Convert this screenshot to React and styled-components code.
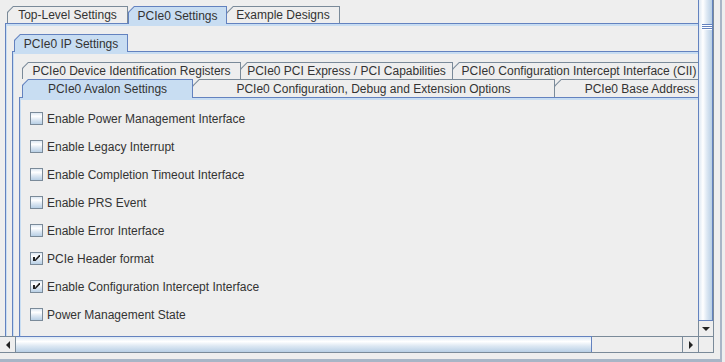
import React from 'react'
import styled, { createGlobalStyle } from 'styled-components'

const GlobalStyle = createGlobalStyle`
  html, body {
    margin: 0;
    padding: 0;
    background: #eeeeee;
  }
  body {
    font-family: "Liberation Sans", Arial, sans-serif;
    font-size: 12px;
    color: #333333;
  }
`

const Frame = styled.div`
  width: 720px;
  height: 359px;
  border-right: 2px solid #a8b5c6;
  border-bottom: 3px solid #a8b5c6;
  background: #eeeeee;
  overflow: hidden;
`

const ScrollPane = styled.div`
  display: grid;
  grid-template-columns: 698px 16px;
  grid-template-rows: 336px 17px;
  width: 714px;
`

const Viewport = styled.div`
  overflow: hidden;
  padding: 6px 0 0 5px;
`

const Pane = styled.div`
  display: flex;
  flex-direction: column;
  width: ${p => (p.$w ? `${p.$w}px` : 'auto')};
`

const TabRun = styled.div`
  display: flex;
  align-items: flex-start;
  height: ${p => p.$h}px;
  padding-left: ${p => p.$inset}px;
  position: relative;
  z-index: 1;
`

const Tab = styled.div`
  flex: none;
  box-sizing: border-box;
  display: flex;
  width: ${p => p.$w}px;
  height: ${p => (p.$sel ? p.$h + 1 : p.$h)}px;
  padding: 1px 1px 0 ${p => (p.$edge ? 1 : 0)}px;
  background: ${p => (p.$sel ? '#6382bf' : '#7a8a99')};
  clip-path: polygon(6px 0, 100% 0, 100% 100%, 0 100%, 0 6px);
`

const TabFace = styled.div`
  flex: 1;
  display: flex;
  align-items: center;
  justify-content: center;
  white-space: nowrap;
  overflow: hidden;
  background: ${p => (p.$sel ? '#c8ddf2' : '#eeeeee')};
  clip-path: ${p =>
    p.$edge
      ? 'polygon(5.4px 0, 100% 0, 100% 100%, 0 100%, 0 5.4px)'
      : 'polygon(6.4px 0, 100% 0, 100% 100%, 0 100%, 0 6.4px)'};
`

const Content = styled.div`
  flex: 1;
  border-top: 1px solid #6382bf;
  border-left: 1px solid #6382bf;
  padding: 2px 0 0 1px;
  background: #c8ddf2;
`

const Body = styled.div`
  background: #eeeeee;
  padding: ${p => p.$pad};
  min-height: 400px;
`

const OptionList = styled.div`
  display: flex;
  flex-direction: column;
  gap: 15px;
`

const Option = styled.label`
  display: flex;
  align-items: center;
  gap: 4px;
  height: 13px;
  white-space: nowrap;
`

const Box = styled.span`
  flex: none;
  box-sizing: border-box;
  width: 13px;
  height: 13px;
  border: 1px solid #7a8a99;
  background: linear-gradient(to bottom, #dde8f3 0%, #ffffff 30%, #dde8f3 60%, #b8cfe5 100%);
  display: flex;

  svg {
    display: block;
  }
`

const VScroll = styled.div`
  display: flex;
  flex-direction: column;
  border-right: 1px solid #7a8a99;
`

const VThumb = styled.div`
  height: 321px;
  box-sizing: border-box;
  border-left: 1px solid #6382bf;
  border-right: 1px solid #6382bf;
  border-bottom: 1px solid #6382bf;
  background: linear-gradient(to right, #dde8f3 0%, #ffffff 30%, #dde8f3 60%, #b8cfe5 100%);
  padding: 24px 0 0 3px;
`

const Grip = styled.div`
  width: 10px;
  height: 6px;
  background: repeating-linear-gradient(to bottom, #6382bf 0 1px, #ffffff 1px 2px);
`

const ArrowButton = styled.div`
  flex: none;
  box-sizing: border-box;
  display: flex;
  align-items: center;
  justify-content: center;
  background: #eeeeee;
  border-color: #7a8a99;
  border-style: solid;
  border-width: ${p => p.$borders};
  width: ${p => p.$w}px;
  height: ${p => p.$h}px;
`

const HScroll = styled.div`
  display: flex;
  box-sizing: border-box;
  border-bottom: 1px solid #7a8a99;
`

const HThumb = styled.div`
  flex: none;
  width: 576px;
  box-sizing: border-box;
  border-top: 1px solid #6382bf;
  border-right: 1px solid #6382bf;
  background: linear-gradient(to bottom, #dde8f3 0%, #ffffff 30%, #dde8f3 60%, #b8cfe5 100%);
`

const Track = styled.div`
  flex: 1;
  border-top: 1px solid #7a8a99;
  background: #eeeeee;
`

const Corner = styled.div`
  box-sizing: border-box;
  border: 1px solid #7a8a99;
  border-right-width: 1px;
  background: #eeeeee;
`

const Arrow = ({ dir }) => {
  const shapes = {
    left: { w: 4, h: 8, pts: '4,0 4,8 0,4' },
    right: { w: 4, h: 8, pts: '0,0 0,8 4,4' },
    down: { w: 8, h: 4, pts: '0,0 8,0 4,4' },
  }
  const s = shapes[dir]
  return (
    <svg width={s.w} height={s.h} viewBox={`0 0 ${s.w} ${s.h}`}>
      <polygon points={s.pts} fill="#222222" />
    </svg>
  )
}

const Check = ({ checked }) => (
  <Box>
    {checked && (
      <svg width="11" height="11" viewBox="1 1 11 11">
        <rect x="3" y="5" width="2" height="4" fill="#222222" />
        <polygon points="9,3 10,3 10,4.6 5.6,9 5,9 5,7.4" fill="#222222" />
      </svg>
    )}
  </Box>
)

const TabbedPane = ({ runs, inset, width, pad, children }) => (
  <Pane $w={width}>
    {runs.map((run, i) => (
      <TabRun key={i} $h={run.h} $inset={inset}>
        {run.tabs.map((t, j) => {
          const edge = j === 0 || !!t.sel
          return (
            <Tab key={t.label} $w={t.w} $h={run.h} $sel={t.sel} $edge={edge}>
              <TabFace $sel={t.sel} $edge={edge}>{t.label}</TabFace>
            </Tab>
          )
        })}
      </TabRun>
    ))}
    <Content>
      <Body $pad={pad}>{children}</Body>
    </Content>
  </Pane>
)

const outerRuns = [
  {
    h: 17,
    tabs: [
      { label: 'Top-Level Settings', w: 121 },
      { label: 'PCIe0 Settings', w: 99, sel: true },
      { label: 'Example Designs', w: 113 },
    ],
  },
]

const ipRuns = [
  { h: 17, tabs: [{ label: 'PCIe0 IP Settings', w: 114, sel: true }] },
]

const pcieRuns = [
  {
    h: 17,
    tabs: [
      { label: 'PCIe0 Device Identification Registers', w: 219 },
      { label: 'PCIe0 PCI Express / PCI Capabilities', w: 212 },
      { label: 'PCIe0 Configuration Intercept Interface (CII)', w: 253 },
    ],
  },
  {
    h: 18,
    tabs: [
      { label: 'PCIe0 Avalon Settings', w: 171, sel: true },
      { label: 'PCIe0 Configuration, Debug and Extension Options', w: 362 },
      { label: 'PCIe0 Base Address', w: 171 },
    ],
  },
]

const options = [
  { label: 'Enable Power Management Interface' },
  { label: 'Enable Legacy Interrupt' },
  { label: 'Enable Completion Timeout Interface' },
  { label: 'Enable PRS Event' },
  { label: 'Enable Error Interface' },
  { label: 'PCIe Header format', checked: true },
  { label: 'Enable Configuration Intercept Interface', checked: true },
  { label: 'Power Management State' },
  { label: '' },
]

export default function App() {
  return (
    <>
      <GlobalStyle />
      <Frame>
        <ScrollPane>
          <Viewport>
            <TabbedPane runs={outerRuns} inset={2} width={740} pad="8px 0 0 5px">
              <TabbedPane runs={ipRuns} inset={2} pad="8px 0 0 5px">
                <TabbedPane runs={pcieRuns} inset={3} pad="12px 0 0 9px">
                  <OptionList>
                    {options.map((o, i) => (
                      <Option key={i}>
                        <Check checked={o.checked} />
                        {o.label}
                      </Option>
                    ))}
                  </OptionList>
                </TabbedPane>
              </TabbedPane>
            </TabbedPane>
          </Viewport>
          <VScroll>
            <VThumb>
              <Grip />
            </VThumb>
            <ArrowButton $w={15} $h={15} $borders="0 0 0 1px">
              <Arrow dir="down" />
            </ArrowButton>
          </VScroll>
          <HScroll>
            <ArrowButton $w={16} $h={16} $borders="1px 1px 0 0">
              <Arrow dir="left" />
            </ArrowButton>
            <HThumb />
            <Track />
            <ArrowButton $w={16} $h={16} $borders="1px 0 0 1px">
              <Arrow dir="right" />
            </ArrowButton>
          </HScroll>
          <Corner />
        </ScrollPane>
      </Frame>
    </>
  )
}
